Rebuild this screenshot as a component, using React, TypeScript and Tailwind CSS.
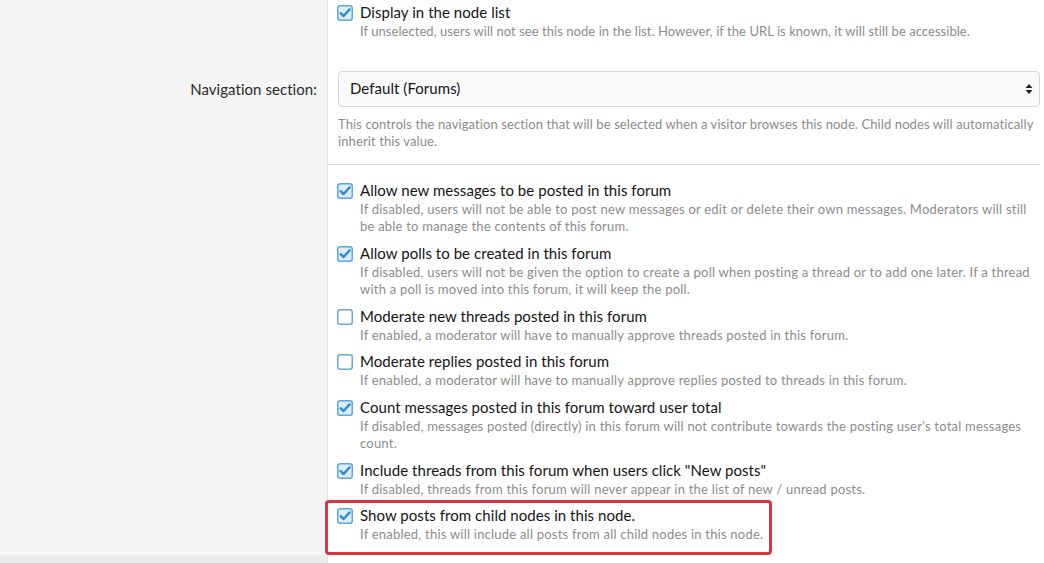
import { FC } from "react";

interface OptionRow {
  label: string;
  hint: string;
  checked: boolean;
  marked?: boolean;
}

const options: OptionRow[] = [
  {
    label: "Allow new messages to be posted in this forum",
    hint: "If disabled, users will not be able to post new messages or edit or delete their own messages. Moderators will still be able to manage the contents of this forum.",
    checked: true,
  },
  {
    label: "Allow polls to be created in this forum",
    hint: "If disabled, users will not be given the option to create a poll when posting a thread or to add one later. If a thread with a poll is moved into this forum, it will keep the poll.",
    checked: true,
  },
  {
    label: "Moderate new threads posted in this forum",
    hint: "If enabled, a moderator will have to manually approve threads posted in this forum.",
    checked: false,
  },
  {
    label: "Moderate replies posted in this forum",
    hint: "If enabled, a moderator will have to manually approve replies posted to threads in this forum.",
    checked: false,
  },
  {
    label: "Count messages posted in this forum toward user total",
    hint: "If disabled, messages posted (directly) in this forum will not contribute towards the posting user's total messages count.",
    checked: true,
  },
  {
    label: 'Include threads from this forum when users click "New posts"',
    hint: "If disabled, threads from this forum will never appear in the list of new / unread posts.",
    checked: true,
  },
  {
    label: "Show posts from child nodes in this node.",
    hint: "If enabled, this will include all posts from all child nodes in this node.",
    checked: true,
    marked: true,
  },
];

const Box: FC<{ checked: boolean }> = ({ checked }) =>
  checked ? (
    <svg width="16" height="16" viewBox="0 0 16 16" className="shrink-0">
      <rect x="0.75" y="0.75" width="14.5" height="14.5" rx="2.5" fill="#dcecf9" stroke="#5fa8dd" strokeWidth="1.5" />
      <path d="M3.6 8.2 L6.6 11 L12.6 4.4" fill="none" stroke="#2f8fd6" strokeWidth="2.4" strokeLinecap="round" strokeLinejoin="round" />
    </svg>
  ) : (
    <svg width="16" height="16" viewBox="0 0 16 16" className="shrink-0">
      <rect x="0.75" y="0.75" width="14.5" height="14.5" rx="2.5" fill="#ffffff" stroke="#6aa9d3" strokeWidth="1.5" />
    </svg>
  );

const Option: FC<{ row: OptionRow }> = ({ row }) => (
  <div className="relative flex gap-[7px] pl-[9px] pr-[4px]">
    {row.marked && (
      <div className="absolute left-[-3px] top-[-4px] h-[55px] w-[447px] rounded-[4px] border-[3px] border-[#d8373f]" />
    )}
    <div className="pt-[4px]">
      <Box checked={row.checked} />
    </div>
    <div className="flex flex-col">
      <div className="text-[15px] leading-[22px] tracking-[0.05px] text-[#141414]">{row.label}</div>
      <div className="text-[13px] leading-[17.5px] tracking-[0.22px] text-[#8c8c8c]">{row.hint}</div>
    </div>
  </div>
);

export default function App() {
  return (
    <div
      className="flex h-[563px] w-[1044px] overflow-hidden bg-white"
      style={{ fontFamily: "Lato, 'Noto Sans', sans-serif" }}
    >
      <div className="flex w-[328px] shrink-0 flex-col border-r border-[#e2e2e2] bg-[#f5f5f5]">
        <div className="h-[79px]" />
        <div className="pr-[10px] text-right text-[15px] leading-[20px] tracking-[0.05px] text-[#2a2a2a]">
          Navigation section:
        </div>
        <div className="flex-1" />
        <div className="h-[8px] bg-[#ebebeb]" />
      </div>
      <div className="flex min-w-0 flex-1 flex-col pr-[4px]">
        <div className="pt-[1px]">
          <div className="flex gap-[7px] pl-[9px]">
            <div className="pt-[4px]">
              <Box checked />
            </div>
            <div className="flex flex-col">
              <div className="text-[15px] leading-[22px] tracking-[0.05px] text-[#141414]">Display in the node list</div>
              <div className="text-[13px] leading-[17.5px] tracking-[0.05px] text-[#8c8c8c]">
                If unselected, users will not see this node in the list. However, if the URL is known, it will still be
                accessible.
              </div>
            </div>
          </div>
        </div>
        <div className="mt-[30px] pl-[10px]">
          <div className="flex h-[36px] items-center justify-between rounded-[4px] border border-[#d6d6d6] bg-[#fafafa] pl-[11px] pr-[6px] text-[15px] tracking-[0.05px] text-[#141414]">
            <span>Default (Forums)</span>
            <svg width="8" height="12" viewBox="0 0 8 12">
              <path d="M4 1 L7.5 5 L0.5 5 Z" fill="#222" />
              <path d="M4 11 L7.5 7 L0.5 7 Z" fill="#222" />
            </svg>
          </div>
          <div className="mt-[9px] text-[13px] leading-[17.5px] tracking-[0.1px] text-[#8c8c8c]">
            This controls the navigation section that will be selected when a visitor browses this node. Child nodes will
            automatically inherit this value.
          </div>
        </div>
        <div className="mt-[13px] h-px bg-[#dcdcdc]" />
        <div className="mt-[14px] flex flex-col gap-[6px]">
          {options.map((row) => (
            <Option key={row.label} row={row} />
          ))}
        </div>
      </div>
    </div>
  );
}
